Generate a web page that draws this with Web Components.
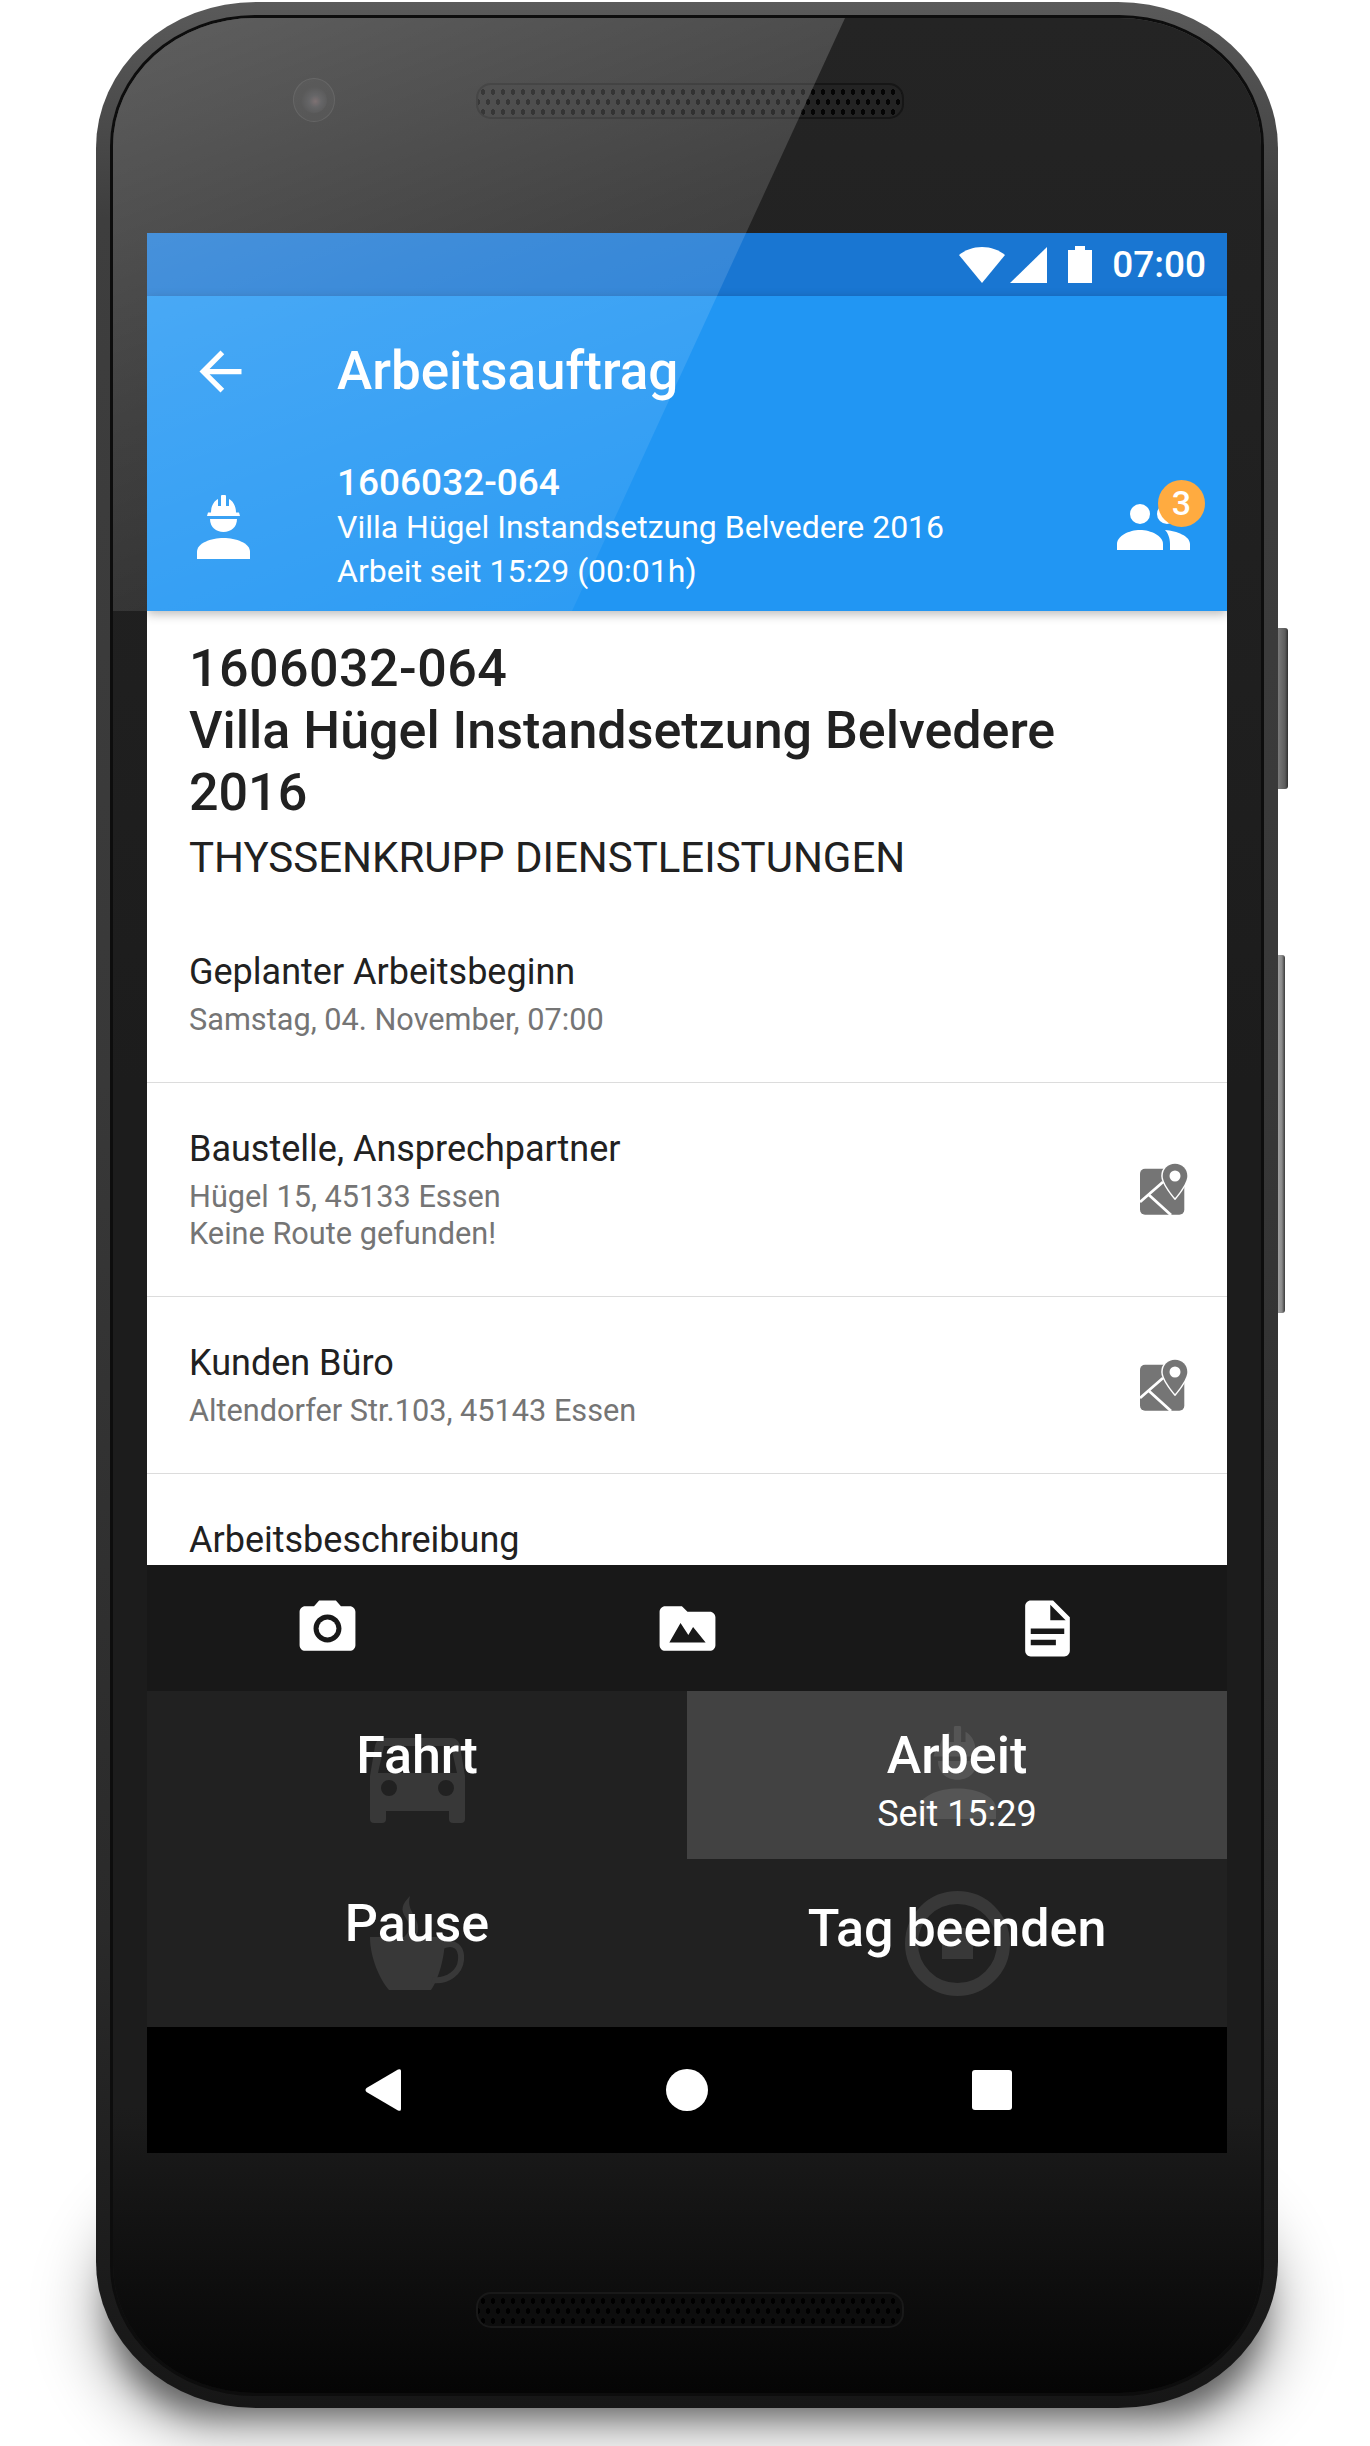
<!DOCTYPE html>
<html lang="de">
<head>
<meta charset="utf-8">
<title>Arbeitsauftrag</title>
<style>
  html, body { margin: 0; padding: 0; background: #fff; }
  body { font-family: Roboto, "Liberation Sans", sans-serif; height: 2446px; overflow: hidden; }
</style>
</head>
<body>
<phone-frame>
  <status-bar time="07:00"></status-bar>
  <app-header title="Arbeitsauftrag" count="3">
    <span slot="id">1606032-064</span>
    <span slot="name">Villa Hügel Instandsetzung Belvedere 2016</span>
    <span slot="state">Arbeit seit 15:29 (00:01h)</span>
  </app-header>
  <job-detail>
    <job-title slot="head" number="1606032-064" customer="THYSSENKRUPP DIENSTLEISTUNGEN">Villa Hügel Instandsetzung Belvedere 2016</job-title>
    <detail-row label="Geplanter Arbeitsbeginn">Samstag, 04. November, 07:00</detail-row>
    <detail-row label="Baustelle, Ansprechpartner" map>Hügel 15, 45133 Essen<br>Keine Route gefunden!</detail-row>
    <detail-row label="Kunden Büro" map>Altendorfer Str.103, 45143 Essen</detail-row>
    <detail-row label="Arbeitsbeschreibung"></detail-row>
  </job-detail>
  <attach-bar></attach-bar>
  <state-grid>
    <state-button label="Fahrt" ghost="bus" w="95" h="85" top="47"></state-button>
    <state-button label="Arbeit" sub="Seit 15:29" ghost="worker" w="77" h="99" top="32" active></state-button>
    <state-button label="Pause" ghost="cup" w="94" h="94" top="37"></state-button>
    <state-button label="Tag beenden" ghost="stop" w="105" h="105" top="32" low></state-button>
  </state-grid>
  <nav-bar></nav-bar>
</phone-frame>

<script>
// all the icons in one table, every one is drawn in its own viewBox
const ICONS = {
  back: ['0 0 24 24', '<path d="M20 11H7.83l5.59-5.59L12 4l-8 8 8 8 1.41-1.41L7.83 13H20v-2z"/>'],
  worker: ['0 0 53 64', '<path d="M10 21l1-3.5h3C14 11 17 6 21 4v7h3V1q0-1 1-1h3q1 0 1 1v10h3V4c4 2 7 7 7 13.5h3l1 3.5z"/><path d="M13 24h27c0 8-6 13-13.500 13S13 32 13 24z"/><path d="M0 64v-7c0-9 14-14 26.500-14S53 48 53 57v7z"/>'],
  people: ['0 0 73 46', '<circle cx="23" cy="10" r="10"/><circle cx="50" cy="10" r="10"/><path d="M0 46v-6c0-8 12-14 23-14s23 6 23 14v6z"/><path d="M48 26c12 1 25 6 25 14v6H53v-6c0-6-2-11-5-14z"/>'],
  map: ['0 0 48 52', '<rect x="0" y="5.700" width="44.300" height="46" rx="5"/><path d="M0 39L23 19M9 32l22 20" stroke="#fff" stroke-width="2.800" fill="none"/><path d="M35 .8C28 .8 22.700 6 22.700 13 22.700 21 35 35 35 35s12.300-14 12.300-22C47.300 6 42 .8 35 .8z" stroke="#fff" stroke-width="3" paint-order="stroke"/><circle cx="35" cy="13" r="5.500" fill="#fff"/>'],
  camera: ['0 0 24 24', '<path fill-rule="evenodd" d="M9 2L7.170 4H4c-1.100 0-2 .9-2 2v12c0 1.100.9 2 2 2h16c1.100 0 2-.9 2-2V6c0-1.100-.9-2-2-2h-3.170L15 2H9zm3 15c-2.760 0-5-2.240-5-5s2.240-5 5-5 5 2.240 5 5-2.240 5-5 5z"/><circle cx="12" cy="12" r="3.200"/>'],
  folder: ['0 0 24 24', '<path fill-rule="evenodd" d="M20 6h-8l-2-2H4c-1.100 0-2 .9-2 2v12c0 1.100.9 2 2 2h16c1.100 0 2-.9 2-2V8c0-1.100-.9-2-2-2zM5.500 17l4-7 2.800 4.300 1.700-2.800L18.500 17h-13z"/>'],
  doc: ['0 0 24 24', '<path fill-rule="evenodd" d="M14 2H6c-1.100 0-2 .9-2 2v16c0 1.100.9 2 2 2h12c1.100 0 2-.9 2-2V8l-6-6zm-1 7V3.500L18.500 9H13zM6 12h12v2H6v-2zm0 4h9v2H6v-2z"/>'],
  bus: ['0 0 95 85', '<path fill-rule="evenodd" d="M14 0h67c5 0 8 3 9 8l5 30v43q0 4-4 4h-8q-4 0-4-4v-8H16v8q0 4-4 4H4q-4 0-4-4V38L5 8c1-5 4-8 9-8zm0 8L8 35h79L81 8H14zm5 34a8 8 0 1 0 0 16 8 8 0 0 0 0-16zm57 0a8 8 0 1 0 0 16 8 8 0 0 0 0-16z"/>'],
  cup: ['0 0 94 94', '<path d="M0 41h75c0 21-7 43-14 53H19C10 84 0 62 0 41z"/><path d="M72 50c13-6 20 2 19 14S78 86 62 84" fill="none" stroke="currentColor" stroke-width="6"/><path d="M40 0c-8 8-10 14-4 22 5 8 4 14-2 19h12c4-9 2-15-3-23-3-6-5-10-3-18z"/>'],
  stop: ['0 0 105 105', '<circle cx="52.500" cy="52.500" r="46" fill="none" stroke="currentColor" stroke-width="13"/><rect x="37" y="37" width="31" height="31"/>']
};

class UiIcon extends HTMLElement {
  connectedCallback() {
    const [box, shapes] = ICONS[this.getAttribute('name')];
    const w = this.getAttribute('w');
    const h = this.getAttribute('h') || w;
    if (!this.shadowRoot) this.attachShadow({ mode: 'open' });
    this.shadowRoot.innerHTML = `
      <style>:host{display:block;line-height:0;width:${w}px;height:${h}px} svg{display:block;fill:currentColor}</style>
      <svg width="${w}" height="${h}" viewBox="${box}">${shapes}</svg>`;
  }
}
customElements.define('ui-icon', UiIcon);

// speaker grille, the dots are three staggered rows
class PhoneSpeaker extends HTMLElement {
  constructor() {
    super();
    this.attachShadow({ mode: 'open' }).innerHTML = `
      <style>
        :host {
          display: block; width: 428px; height: 36px; box-sizing: border-box;
          border-radius: 15px;
          border: 2px solid var(--edge, #161616);
          --dot: radial-gradient(ellipse 2.400px 3.200px, var(--hole, #050505) 85%, transparent 100%);
          background:
            var(--dot) 10px 2px / 10px 10px repeat-x,
            var(--dot) 5px 12px / 10px 10px repeat-x,
            var(--dot) 10px 22px / 10px 10px repeat-x,
            var(--plate, #232323);
        }
      </style>`;
  }
}
customElements.define('phone-speaker', PhoneSpeaker);

class PhoneFrame extends HTMLElement {
  constructor() {
    super();
    this.attachShadow({ mode: 'open' }).innerHTML = `
      <style>
        :host { display: block; position: relative; width: 1182px; height: 2406px; margin: 2px 0 0 96px; }
        .shadow {
          position: absolute; left: 14px; right: 14px; top: 2200px; bottom: -8px;
          border-radius: 150px; background: rgba(0,0,0,.62); filter: blur(16px);
          box-shadow: 0 0 50px 18px rgba(0,0,0,.28);
        }
        .key { position: absolute; left: 100%; border-radius: 0 3px 3px 0; }
        .power { top: 626px; height: 161px; width: 10px; background: linear-gradient(90deg, #7a7a7a, #5c5c5c 70%, #2e2e2e); }
        .volume { top: 953px; height: 358px; width: 7px; background: linear-gradient(90deg, #a0a0a0, #8a8a8a 55%, #3a3a3a); }
        .rim {
          position: relative; height: 100%; box-sizing: border-box; padding: 16px 17px 15px;
          border-radius: 160px / 146px;
          background: linear-gradient(180deg, #5a5a5a 0, #3e3e3e 9%, #383838 45%, #2a2a2a 80%, #161616 100%);
        }
        .face {
          position: relative; height: 100%; box-sizing: border-box; overflow: hidden;
          display: flex; flex-direction: column; align-items: center;
          border-radius: 142px / 128px;
          box-shadow: 0 0 0 3px #0d0d0d;
          background: linear-gradient(180deg, #242424 0, #1c1c1c 45%, #1c1c1c 88%, #050505 100%);
        }
        .top { position: relative; height: 215px; width: 100%; flex: none; padding-top: 65px; box-sizing: border-box; display: flex; justify-content: center; }
        .top phone-speaker { margin-left: 6px; }
        .camera {
          position: absolute; left: 180px; top: 60px; width: 42px; height: 44px; box-sizing: border-box;
          border-radius: 50%; border: 1px solid rgba(255,255,255,.08); background: rgba(255,255,255,.03);
          display: flex; align-items: center; justify-content: center;
        }
        .camera i { width: 26px; height: 26px; border-radius: 50%; background: radial-gradient(circle at 55% 55%, #5a4a4c 0, #3a3a3c 30%, #2a2a2a 70%); }
        .screen { width: 1080px; height: 1920px; flex: none; display: flex; flex-direction: column; background: #fff; overflow: hidden; }
        .bottom { flex: 1; width: 100%; padding-top: 139px; box-sizing: border-box; display: flex; justify-content: center; }
        .bottom phone-speaker { margin-left: 6px; --plate: #0d0d0d; --edge: #191919; --hole: #000; }
        .glare {
          position: absolute; inset: 0 auto auto 0; z-index: 2; width: 736px; height: 593px; pointer-events: none;
          clip-path: polygon(0 0, 732px 0, 459px 593px, 0 593px);
          background: linear-gradient(160deg, rgba(255,255,255,.27) 0, rgba(255,255,255,.15) 45%, rgba(255,255,255,.03) 100%);
        }
      </style>
      <div class="shadow"></div>
      <div class="key power"></div>
      <div class="key volume"></div>
      <div class="rim">
        <div class="face">
          <div class="top"><div class="camera"><i></i></div><phone-speaker></phone-speaker></div>
          <div class="screen"><slot></slot></div>
          <div class="bottom"><phone-speaker></phone-speaker></div>
          <div class="glare"></div>
        </div>
      </div>`;
  }
}
customElements.define('phone-frame', PhoneFrame);

class StatusBar extends HTMLElement {
  connectedCallback() {
    this.attachShadow({ mode: 'open' }).innerHTML = `
      <style>
        :host {
          display: flex; align-items: center; justify-content: flex-end; flex: none;
          height: 63px; padding-right: 21px; box-sizing: border-box;
          background: #1976d2; color: #fff;
        }
        svg { display: block; fill: #fff; }
        .time { font: 500 37px/63px Roboto, sans-serif; margin-left: 20px; }
        .signal { margin-left: 5px; }
        .battery { margin-left: 21px; }
      </style>
      <svg width="46" height="36" viewBox="0 0 46 36"><path d="M0 8C6 3 14 0 23 0s17 3 23 8L23 36z"/></svg>
      <svg class="signal" width="37" height="36" viewBox="0 0 37 36"><path d="M0 36L37 0v36z"/></svg>
      <svg class="battery" width="24" height="37" viewBox="0 0 24 37"><path d="M7 0h10v4h7v33H0V4h7z"/></svg>
      <span class="time">${this.getAttribute('time')}</span>`;
  }
}
customElements.define('status-bar', StatusBar);

class AppHeader extends HTMLElement {
  connectedCallback() {
    this.attachShadow({ mode: 'open' }).innerHTML = `
      <style>
        :host {
          display: block; flex: none; position: relative; z-index: 1; height: 315px;
          background: #2196f3; color: #fff; box-shadow: 0 3px 10px rgba(0,0,0,.28);
        }
        .bar { display: flex; align-items: center; height: 150px; padding-left: 42px; box-sizing: border-box; }
        .bar h1 { margin: 0 0 0 85px; font: 500 53px/60px Roboto, sans-serif; }
        .job { display: flex; align-items: center; padding: 15px 37px 18px 50px; }
        .lines { flex: 1; margin-left: 87px; font: 400 32px/44px Roboto, sans-serif; }
        .lines div { white-space: nowrap; }
        .id { font-weight: 500; font-size: 37px; }
        .team { position: relative; }
        .badge {
          position: absolute; left: 41px; top: -24px; width: 47px; height: 47px; border-radius: 50%;
          background: #ffab40; font: 500 34px/47px Roboto, sans-serif; text-align: center;
        }
      </style>
      <div class="bar"><ui-icon name="back" w="63"></ui-icon><h1>${this.getAttribute('title')}</h1></div>
      <div class="job">
        <ui-icon name="worker" w="53" h="64"></ui-icon>
        <div class="lines">
          <div class="id"><slot name="id"></slot></div>
          <div><slot name="name"></slot></div>
          <div><slot name="state"></slot></div>
        </div>
        <div class="team"><ui-icon name="people" w="73" h="46"></ui-icon><span class="badge">${this.getAttribute('count')}</span></div>
      </div>`;
  }
}
customElements.define('app-header', AppHeader);

class JobDetail extends HTMLElement {
  constructor() {
    super();
    this.attachShadow({ mode: 'open' }).innerHTML = `
      <style>
        :host { display: block; flex: 1; min-height: 0; overflow: hidden; background: #fff; color: #212121; }
      </style>
      <slot name="head"></slot><slot></slot>`;
  }
}
customElements.define('job-detail', JobDetail);

class JobTitle extends HTMLElement {
  connectedCallback() {
    this.attachShadow({ mode: 'open' }).innerHTML = `
      <style>
        :host { display: block; padding: 27px 70px 23px 42px; }
        h2 { margin: 0; font: 500 52px/62px Roboto, sans-serif; color: #212121; }
        .number { display: block; letter-spacing: .45px; }
        p { margin: 9px 0 0; font: 400 42px/50px Roboto, sans-serif; color: #212121; }
      </style>
      <h2><span class="number">${this.getAttribute('number')}</span><slot></slot></h2>
      <p>${this.getAttribute('customer')}</p>`;
  }
}
customElements.define('job-title', JobTitle);

class DetailRow extends HTMLElement {
  connectedCallback() {
    const map = this.hasAttribute('map') ? '<ui-icon class="map" name="map" w="48" h="52"></ui-icon>' : '';
    this.attachShadow({ mode: 'open' }).innerHTML = `
      <style>
        :host {
          display: flex; align-items: center; padding: 43px 39px 44px 42px;
          border-top: 1px solid #dcdcdc;
        }
        :host(:first-of-type) { border-top: 0; }
        .text { flex: 1; }
        .label { font: 400 36px/47px Roboto, sans-serif; color: #212121; }
        .value { margin-top: 5px; font: 400 30.700px/37px Roboto, sans-serif; color: #757575; }
        .map { color: #757575; }
      </style>
      <div class="text"><div class="label">${this.getAttribute('label')}</div><div class="value"><slot></slot></div></div>
      ${map}`;
  }
}
customElements.define('detail-row', DetailRow);

class AttachBar extends HTMLElement {
  connectedCallback() {
    this.attachShadow({ mode: 'open' }).innerHTML = `
      <style>
        :host { display: grid; grid-template-columns: repeat(3, 360px); flex: none; height: 126px; background: #181818; color: #fff; }
        div { display: flex; align-items: center; justify-content: center; }
      </style>
      <div><ui-icon name="camera" w="67"></ui-icon></div>
      <div><ui-icon name="folder" w="67"></ui-icon></div>
      <div><ui-icon name="doc" w="67"></ui-icon></div>`;
  }
}
customElements.define('attach-bar', AttachBar);

class StateGrid extends HTMLElement {
  constructor() {
    super();
    this.attachShadow({ mode: 'open' }).innerHTML = `
      <style>
        :host { display: grid; grid-template-columns: 1fr 1fr; grid-auto-rows: 168px; flex: none; background: #212121; }
      </style>
      <slot></slot>`;
  }
}
customElements.define('state-grid', StateGrid);

class StateButton extends HTMLElement {
  connectedCallback() {
    const sub = this.getAttribute('sub');
    this.attachShadow({ mode: 'open' }).innerHTML = `
      <style>
        :host {
          display: block; position: relative; text-align: center; color: #fff;
          background: #212121; --ghost: #383838;
          padding-top: 33px; box-sizing: border-box;
        }
        :host([active]) { background: #424242; --ghost: #555; }
        :host([low]) { padding-top: 38px; }
        .ghost {
          position: absolute; inset: 0; display: flex; justify-content: center; align-items: flex-start;
          padding-top: ${this.getAttribute('top')}px; box-sizing: border-box; color: var(--ghost);
        }
        .label { position: relative; font: 500 52px/64px Roboto, sans-serif; }
        .sub { position: relative; margin-top: 3px; font: 400 36px/46px Roboto, sans-serif; }
      </style>
      <div class="ghost"><ui-icon name="${this.getAttribute('ghost')}" w="${this.getAttribute('w')}" h="${this.getAttribute('h')}"></ui-icon></div>
      <div class="label">${this.getAttribute('label')}</div>
      ${sub ? `<div class="sub">${sub}</div>` : ''}`;
  }
}
customElements.define('state-button', StateButton);

class NavBar extends HTMLElement {
  constructor() {
    super();
    this.attachShadow({ mode: 'open' }).innerHTML = `
      <style>
        :host { display: flex; justify-content: center; align-items: center; flex: none; height: 126px; background: #000; }
        div { width: 305px; display: flex; justify-content: center; }
        svg { display: block; fill: #fff; }
        .home { width: 304px; }
      </style>
      <div><svg width="36" height="42" viewBox="0 0 36 42"><path d="M33 .6Q36-.8 36 2v38q0 2.800-3 1.400L1.500 23Q-.5 21 1.500 19z"/></svg></div>
      <div class="home"><svg width="42" height="42" viewBox="0 0 42 42"><circle cx="21" cy="21" r="21"/></svg></div>
      <div><svg width="40" height="40" viewBox="0 0 40 40"><rect width="40" height="40" rx="3"/></svg></div>`;
  }
}
customElements.define('nav-bar', NavBar);
</script>
</body>
</html>
